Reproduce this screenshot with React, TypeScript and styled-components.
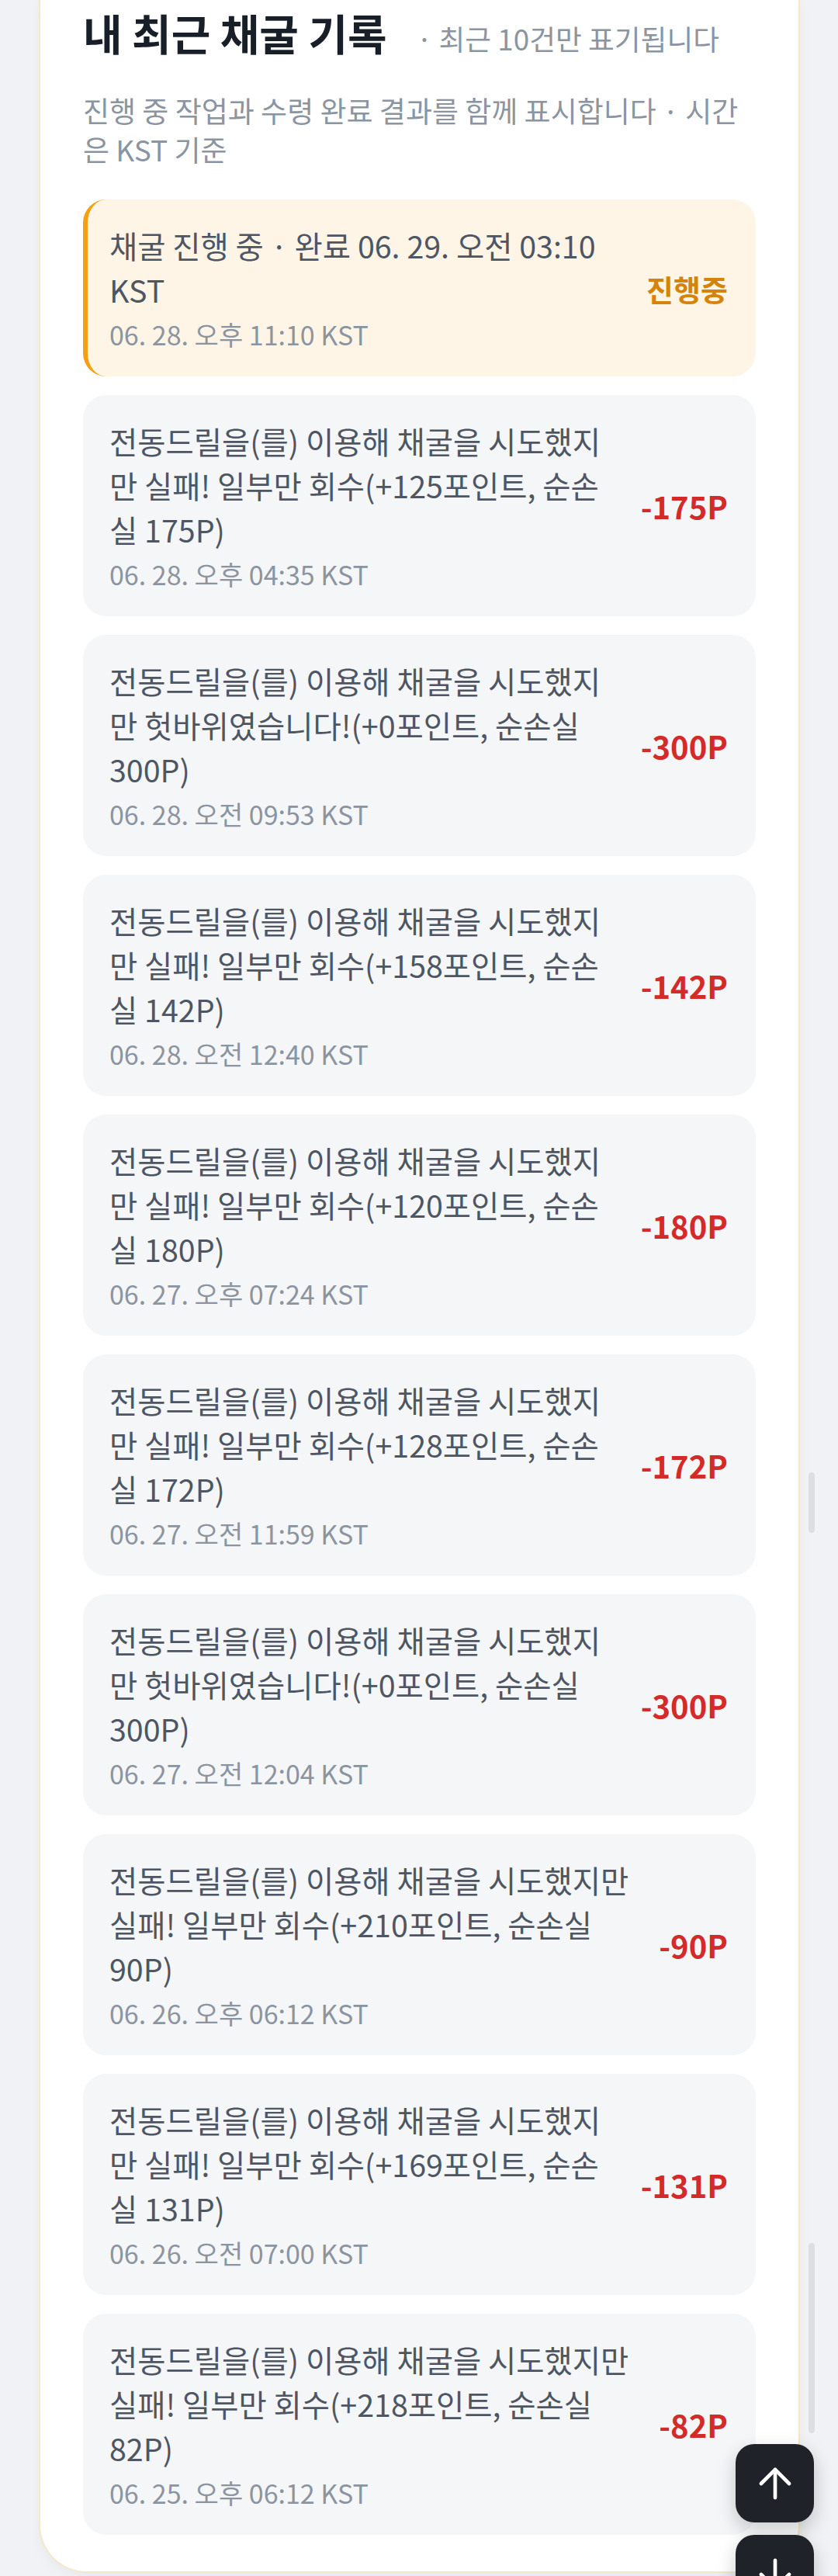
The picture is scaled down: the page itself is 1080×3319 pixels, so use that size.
import React from "react";
import styled, { createGlobalStyle } from "styled-components";

type MiningRecord = {
  text: string;
  date: string;
  amount: string;
  pending?: boolean;
};

const records: MiningRecord[] = [
  { text: "채굴 진행 중 · 완료 06. 29. 오전 03:10 KST", date: "06. 28. 오후 11:10 KST", amount: "진행중", pending: true },
  { text: "전동드릴을(를) 이용해 채굴을 시도했지만 실패! 일부만 회수(+125포인트, 순손실 175P)", date: "06. 28. 오후 04:35 KST", amount: "-175P" },
  { text: "전동드릴을(를) 이용해 채굴을 시도했지만 헛바위였습니다!(+0포인트, 순손실 300P)", date: "06. 28. 오전 09:53 KST", amount: "-300P" },
  { text: "전동드릴을(를) 이용해 채굴을 시도했지만 실패! 일부만 회수(+158포인트, 순손실 142P)", date: "06. 28. 오전 12:40 KST", amount: "-142P" },
  { text: "전동드릴을(를) 이용해 채굴을 시도했지만 실패! 일부만 회수(+120포인트, 순손실 180P)", date: "06. 27. 오후 07:24 KST", amount: "-180P" },
  { text: "전동드릴을(를) 이용해 채굴을 시도했지만 실패! 일부만 회수(+128포인트, 순손실 172P)", date: "06. 27. 오전 11:59 KST", amount: "-172P" },
  { text: "전동드릴을(를) 이용해 채굴을 시도했지만 헛바위였습니다!(+0포인트, 순손실 300P)", date: "06. 27. 오전 12:04 KST", amount: "-300P" },
  { text: "전동드릴을(를) 이용해 채굴을 시도했지만 실패! 일부만 회수(+210포인트, 순손실 90P)", date: "06. 26. 오후 06:12 KST", amount: "-90P" },
  { text: "전동드릴을(를) 이용해 채굴을 시도했지만 실패! 일부만 회수(+169포인트, 순손실 131P)", date: "06. 26. 오전 07:00 KST", amount: "-131P" },
  { text: "전동드릴을(를) 이용해 채굴을 시도했지만 실패! 일부만 회수(+218포인트, 순손실 82P)", date: "06. 25. 오후 06:12 KST", amount: "-82P" },
];

export default function App() {
  return (
    <>
      <GlobalStyle />
      <Page>
        <Panel>
          <Header>
            <Title>내 최근 채굴 기록</Title>
            <HeadNote>· 최근 10건만 표기됩니다</HeadNote>
          </Header>
          <Description>진행 중 작업과 수령 완료 결과를 함께 표시합니다 · 시간은 KST 기준</Description>
          <RecordList>
            {records.map((r, i) => (
              <RecordCard key={i} $pending={r.pending}>
                <RecordBody>
                  <RecordText>{r.text}</RecordText>
                  <RecordDate>{r.date}</RecordDate>
                </RecordBody>
                <Amount $pending={r.pending}>{r.amount}</Amount>
              </RecordCard>
            ))}
          </RecordList>
        </Panel>
      </Page>

      <ScrollThumb $top={1897} $height={78} />
      <ScrollThumb $top={2890} $height={245} />

      <FloatingNav>
        <NavButton aria-label="맨 위로">
          <svg width="62" height="62" viewBox="0 0 24 24" fill="none" stroke="#fff" strokeWidth="1.8" strokeLinecap="round" strokeLinejoin="round">
            <path d="M12 19V5" />
            <path d="m5 12 7-7 7 7" />
          </svg>
        </NavButton>
        <NavButton aria-label="맨 아래로">
          <svg width="62" height="62" viewBox="0 0 24 24" fill="none" stroke="#fff" strokeWidth="1.8" strokeLinecap="round" strokeLinejoin="round">
            <path d="M12 5v14" />
            <path d="m19 12-7 7-7-7" />
          </svg>
        </NavButton>
      </FloatingNav>
    </>
  );
}

const GlobalStyle = createGlobalStyle`
  * { box-sizing: border-box; }
  html, body {
    margin: 0;
    padding: 0;
    background: #f0f2f5;
    font-family: "Noto Sans CJK KR", "Noto Sans", sans-serif;
  }
  #root { min-height: 3319px; }
`;

const Page = styled.div`
  padding: 0 49px 0 50px;
`;

const Panel = styled.section`
  background: #ffffff;
  border: 2px solid #f6e7c9;
  border-top: none;
  border-radius: 0 0 62px 62px;
  padding: 5px 55px 47px;
  box-shadow: 0 6px 18px rgba(30, 35, 45, 0.04);
`;

const Header = styled.div`
  display: flex;
  align-items: baseline;
  gap: 38px;
`;

const Title = styled.h2`
  margin: 0;
  font-size: 55px;
  line-height: 72px;
  font-weight: 700;
  color: #191f28;
`;

const HeadNote = styled.span`
  font-size: 36.75px;
  color: #8b95a1;
`;

const Description = styled.p`
  margin: 40px 0 40px;
  padding-right: 10px;
  font-size: 37px;
  line-height: 50px;
  color: #8b95a1;
`;

const RecordList = styled.div`
  display: flex;
  flex-direction: column;
  gap: 24px;
`;

const RecordCard = styled.div<{ $pending?: boolean }>`
  display: flex;
  align-items: center;
  gap: 37px;
  border-radius: 30px;
  padding: 30px 36px 29px ${(p) => (p.$pending ? "28px" : "34px")};
  background: ${(p) => (p.$pending ? "#fff5e7" : "#f5f6f8")};
  border-left: ${(p) => (p.$pending ? "6px solid #f4a012" : "none")};
`;

const RecordBody = styled.div`
  flex: 1;
  min-width: 0;
  display: flex;
  flex-direction: column;
  gap: 5px;
`;

const RecordText = styled.div`
  font-size: 39.4px;
  line-height: 57px;
  color: #4e5663;
`;

const RecordDate = styled.div`
  font-size: 34px;
  line-height: 50px;
  color: #8b95a1;
`;

const Amount = styled.div<{ $pending?: boolean }>`
  flex-shrink: 0;
  white-space: nowrap;
  font-weight: 700;
  font-size: ${(p) => (p.$pending ? "38px" : "40px")};
  color: ${(p) => (p.$pending ? "#d4830c" : "#d32a2a")};
`;

const ScrollThumb = styled.div<{ $top: number; $height: number }>`
  position: absolute;
  left: 1042px;
  top: ${(p) => p.$top}px;
  width: 8px;
  height: ${(p) => p.$height}px;
  border-radius: 4px;
  background: #dcdee3;
`;

const FloatingNav = styled.div`
  position: fixed;
  right: 31px;
  bottom: -48px;
  display: flex;
  flex-direction: column;
  gap: 16px;
`;

const NavButton = styled.button`
  width: 101px;
  height: 101px;
  border: none;
  border-radius: 24px;
  background: #1f2228;
  display: flex;
  align-items: center;
  justify-content: center;
  box-shadow: 0 10px 24px rgba(20, 24, 32, 0.22);
  padding: 0;
`;
